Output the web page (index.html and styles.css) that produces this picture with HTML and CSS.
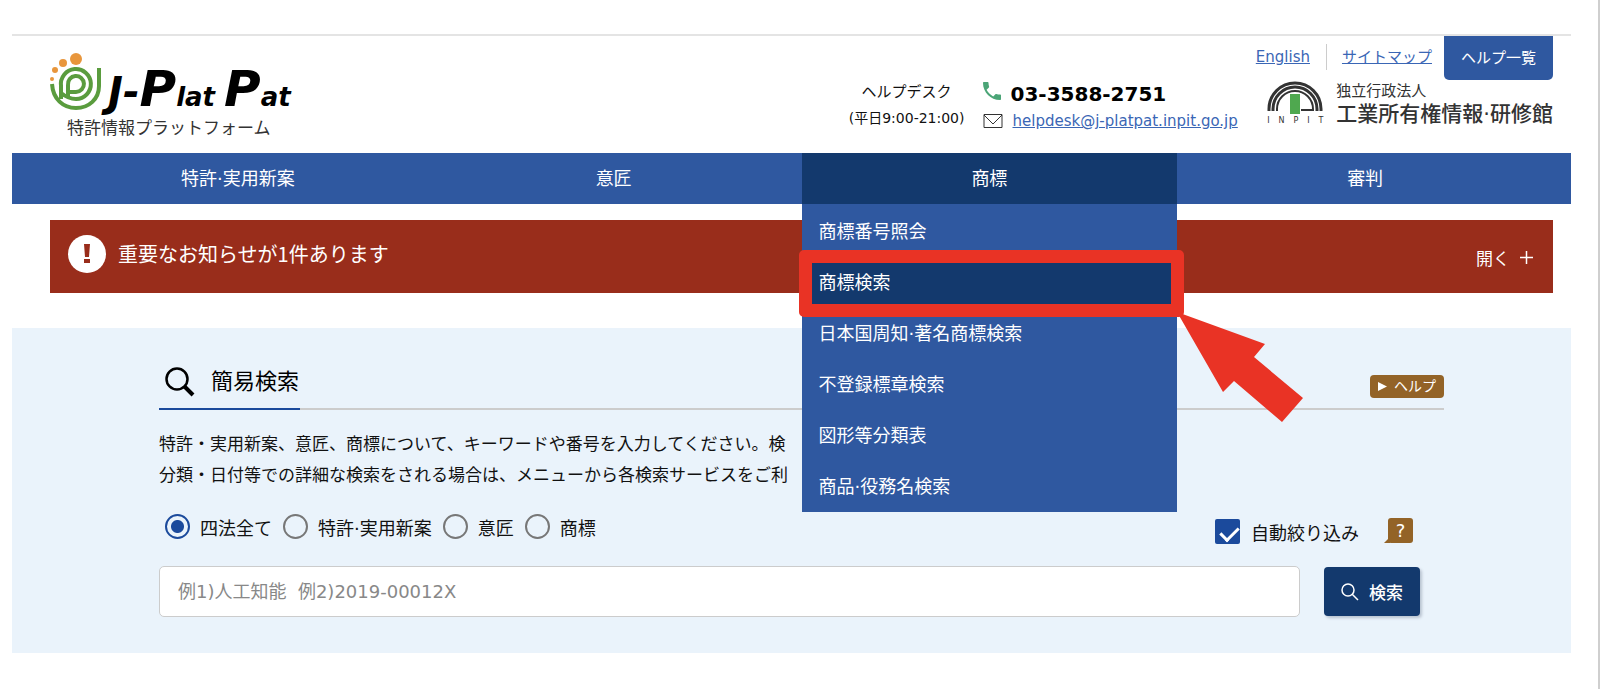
FILE: index.html
```html
<!DOCTYPE html>
<html lang="ja">
<head>
    <meta charset="UTF-8">
    <meta name="viewport" content="width=device-width, initial-scale=1.0">
    <title>J-PlatPat 特許情報プラットフォーム</title>
    <link rel="stylesheet" href="styles.css">
</head>
<body>
    <div class="page">
        <header class="header">
            <a class="logo" href="#">
                <span class="logo-main">
                    <svg class="logo-mark" viewBox="0 0 52 58" width="52" height="58" aria-hidden="true">
                        <g fill="#e8963c">
                            <circle cx="26" cy="6" r="6"/>
                            <circle cx="13" cy="10" r="4"/>
                            <circle cx="5" cy="17" r="3"/>
                            <circle cx="2" cy="26" r="2"/>
                        </g>
                        <g fill="none" stroke="#5a9c3e" stroke-width="4">
                            <path d="M2 31C3 46 13 55 26 55C39 55 49 46 49 33V15"/>
                            <path d="M11 46V33A15 15 0 1 1 26 46C20 46 16 44 11 40"/>
                            <path d="M18 43V32A8 8 0 1 1 26 39H20"/>
                        </g>
                    </svg>
                    <span class="logo-word">J-<b>P</b><small>lat </small><b>P</b><small>at</small></span>
                </span>
                <span class="logo-sub">特許情報プラットフォーム</span>
            </a>

            <div class="header-right">
                <div class="helpdesk">
                    <div class="helpdesk-label">
                        <div>ヘルプデスク</div>
                        <div class="hours">(平日9:00-21:00)</div>
                    </div>
                    <div class="helpdesk-contact">
                        <div class="contact-row">
                            <svg class="phone-icon" viewBox="3 3 18 18" width="18" height="18" aria-hidden="true">
                                <path fill="#4ba577" d="M6.6 10.8c1.4 2.8 3.800 5.100 6.600 6.600l2.200-2.200c.3-.3.7-.4 1-.2 1.100.4 2.300.6 3.600.6.600 0 1 .4 1 1V20c0 .6-.4 1-1 1C10.600 21 3 13.400 3 4c0-.6.4-1 1-1h3.500c.6 0 1 .4 1 1 0 1.300.2 2.500.6 3.600.1.300 0 .7-.2 1z"/>
                            </svg>
                            <span class="phone">03-3588-2751</span>
                        </div>
                        <div class="contact-row">
                            <svg viewBox="0 0 20 14" width="20" height="14" aria-hidden="true">
                                <path fill="none" stroke="#333" d="M1 .5H19V13.500H1ZM1 1L10 10L19 1"/>
                            </svg>
                            <a class="link" href="mailto:helpdesk@j-platpat.inpit.go.jp">helpdesk@j-platpat.inpit.go.jp</a>
                        </div>
                    </div>
                </div>

                <div class="header-side">
                    <div class="top-links">
                        <a class="link" href="#">English</a>
                        <a class="link sitemap" href="#">サイトマップ</a>
                        <button type="button" class="help-list-btn">ヘルプ一覧</button>
                    </div>
                    <a class="org" href="#">
                        <span class="org-mark">
                            <svg viewBox="0 0 56 34" width="56" height="34" aria-hidden="true">
                                <g fill="none" stroke="#333" stroke-width="3">
                                    <path d="M2 30V28A26 26 0 0 1 54 28V30"/>
                                    <path d="M6 30V28A22 22 0 0 1 50 28V30"/>
                                    <path d="M10 30V28A18 18 0 0 1 46 28V29H34" stroke-width="2"/>
                                </g>
                                <rect x="23" y="13" width="10" height="20" fill="#4fa84f"/>
                            </svg>
                            <span class="org-letters"><i>I</i><i>N</i><i>P</i><i>I</i><i>T</i></span>
                        </span>
                        <span class="org-name">
                            <span class="org-type">独立行政法人</span>
                            <span class="org-title">工業所有権情報·研修館</span>
                        </span>
                    </a>
                </div>
            </div>
        </header>

        <nav class="nav">
            <ul class="nav-list">
                <li class="nav-item"><a class="nav-link" href="#">特許·実用新案</a></li>
                <li class="nav-item"><a class="nav-link" href="#">意匠</a></li>
                <li class="nav-item">
                    <a class="nav-link active" href="#">商標</a>
                    <ul class="submenu">
                        <li><a class="submenu-link" href="#">商標番号照会</a></li>
                        <li class="marked">
                            <a class="submenu-link active" href="#">商標検索</a>
                            <svg class="arrow" viewBox="0 0 126 110" width="126" height="110" aria-hidden="true">
                                <path fill="#e93325" d="M0 0L88 32L77 45L126 86L105 110L57 69L46 80Z"/>
                            </svg>
                        </li>
                        <li><a class="submenu-link" href="#">日本国周知·著名商標検索</a></li>
                        <li><a class="submenu-link" href="#">不登録標章検索</a></li>
                        <li><a class="submenu-link" href="#">図形等分類表</a></li>
                        <li><a class="submenu-link" href="#">商品·役務名検索</a></li>
                    </ul>
                </li>
                <li class="nav-item"><a class="nav-link" href="#">審判</a></li>
            </ul>
        </nav>

        <div class="notice">
            <svg viewBox="0 0 38 38" width="38" height="38" aria-hidden="true">
                <circle cx="19" cy="19" r="19" fill="#fff"/>
                <path fill="#992d1b" d="M16 9H22L21 22H17ZM16 24H22V28H16Z"/>
            </svg>
            <p class="notice-text">重要なお知らせが1件あります</p>
            <button type="button" class="notice-open">
                開く
                <svg viewBox="0 0 13 13" width="13" height="13" aria-hidden="true">
                    <path fill="none" stroke="#fff" stroke-width="1.500" d="M0 6.500H13M6.500 0V13"/>
                </svg>
            </button>
        </div>

        <main class="search">
            <div class="search-head">
                <h1 class="search-title">
                    <svg viewBox="0 0 30 30" width="30" height="30" aria-hidden="true">
                        <circle cx="12" cy="12" r="10.500" fill="none" stroke="#000" stroke-width="2.500"/>
                        <path stroke="#000" stroke-width="4" d="M19 19L28 28"/>
                    </svg>
                    簡易検索
                </h1>
                <button type="button" class="help-btn">
                    <svg viewBox="0 0 9 9" width="9" height="9" aria-hidden="true"><path fill="#fff" d="M0 0L9 4.500L0 9Z"/></svg>
                    ヘルプ
                </button>
            </div>

            <p class="search-desc">
                特許・実用新案、意匠、商標について、キーワードや番号を入力してください。検<br>
                分類・日付等での詳細な検索をされる場合は、メニューから各検索サービスをご利
            </p>

            <form class="search-form">
                <div class="options">
                    <div class="radios">
                        <label class="radio"><input type="radio" name="law" checked>四法全て</label>
                        <label class="radio"><input type="radio" name="law">特許·実用新案</label>
                        <label class="radio"><input type="radio" name="law">意匠</label>
                        <label class="radio"><input type="radio" name="law">商標</label>
                    </div>
                    <div class="narrow">
                        <label class="check"><input type="checkbox" checked>自動絞り込み</label>
                        <button type="button" class="tip-btn">?</button>
                    </div>
                </div>
                <div class="search-row">
                    <input type="text" class="keyword" aria-label="キーワード" placeholder="例1)人工知能&nbsp; 例2)2019-00012X">
                    <button type="submit" class="search-btn">
                        <svg viewBox="0 0 18 18" width="18" height="18" aria-hidden="true">
                            <circle cx="7" cy="7" r="6" fill="none" stroke="#fff" stroke-width="1.500"/>
                            <path stroke="#fff" stroke-width="1.500" d="M11 11L17 17"/>
                        </svg>
                        検索
                    </button>
                </div>
            </form>
        </main>
    </div>
</body>
</html>
```

FILE: styles.css
```css
* {
    margin: 0;
    padding: 0;
    box-sizing: border-box;
}

html {
    min-height: 100vh;
    border-right: 2px solid #cfcfcf;
}

body {
    font-family: "DejaVu Sans", "Noto Sans CJK JP", sans-serif;
    font-size: 17px;
    color: #111;
    background: #fff;
}

button,
input {
    font-family: inherit;
}

button {
    border: none;
    cursor: pointer;
}

a {
    color: inherit;
    text-decoration: none;
}

ul {
    list-style: none;
}

svg {
    display: block;
    flex: none;
}

.page {
    margin: 34px 27px 0 12px;
    border-top: 2px solid #e4e4e4;
}

.link {
    font-size: 15px;
    color: #3a66b5;
    text-decoration: underline;
}

/* header */
.header {
    display: flex;
    justify-content: space-between;
    padding: 0 18px 13px 38px;
}

.logo {
    padding-top: 17px;
}

.logo-main {
    display: flex;
    align-items: flex-end;
    gap: 6px;
}

.logo-word {
    font-size: 40px;
    font-weight: bold;
    font-style: italic;
    line-height: 38px;
    color: #000;
    white-space: nowrap;
}

.logo-word b {
    font-size: 50px;
}

.logo-word small {
    font-size: 26px;
    line-height: 20px;
}

.logo-sub {
    display: block;
    padding: 5px 0 0 17px;
    line-height: 24px;
    color: #333;
}

.header-right {
    display: flex;
    gap: 18px;
}

.helpdesk {
    display: flex;
    gap: 18px;
    padding-top: 43px;
}

.helpdesk-label {
    font-size: 15px;
    line-height: 26px;
    text-align: center;
}

.hours {
    font-size: 14px;
}

.contact-row {
    display: flex;
    align-items: center;
    gap: 10px;
    line-height: 24px;
}

.phone-icon {
    margin-bottom: 6px;
}

.phone {
    font-size: 20px;
    font-weight: bold;
    line-height: 30px;
    color: #000;
}

.header-side {
    display: flex;
    flex-direction: column;
    align-items: flex-end;
}

.top-links {
    display: flex;
    align-items: flex-start;
    line-height: 42px;
}

.sitemap {
    position: relative;
    margin: 0 12px 0 16px;
    padding-left: 16px;
}

.sitemap::before {
    content: "";
    position: absolute;
    left: 0;
    top: 8px;
    height: 26px;
    border-left: 1px solid #ccc;
}

.help-list-btn {
    height: 44px;
    padding: 0 17px 4px;
    font-size: 15px;
    color: #fff;
    background: #2f58a0;
    border-radius: 0 0 5px 5px;
}

.org {
    display: flex;
    gap: 13px;
    color: #333;
}

.org-mark {
    padding-top: 1px;
}

.org-letters {
    display: flex;
    justify-content: space-between;
    font-size: 8px;
    line-height: 11px;
}

.org-letters i {
    font-style: normal;
}

.org-type {
    display: block;
    font-size: 15px;
    line-height: 22px;
}

.org-title {
    display: block;
    font-size: 21px;
    font-weight: 500;
    line-height: 24px;
}

/* global navigation */
.nav {
    padding: 0 18px 0 38px;
    background: #2f58a0;
}

.nav-list {
    display: grid;
    grid-template-columns: repeat(4, 1fr);
}

.nav-item {
    position: relative;
}

.nav-link {
    display: block;
    font-size: 18px;
    line-height: 51px;
    text-align: center;
    color: #fff;
}

.nav-link.active,
.submenu-link.active {
    background: #13396d;
}

.submenu {
    position: absolute;
    top: 100%;
    left: 0;
    z-index: 10;
    width: 100%;
    padding-top: 2px;
    background: #2f58a0;
}

.submenu-link {
    display: block;
    padding: 0 17px;
    font-size: 18px;
    line-height: 51px;
    color: #fff;
}

.marked {
    position: relative;
    z-index: 1;
}

/* red frame around the highlighted entry */
.marked::after {
    content: "";
    position: absolute;
    top: -7px;
    right: -7px;
    bottom: -9px;
    left: -3px;
    border: 13px solid #e93325;
    border-radius: 5px;
}

.arrow {
    position: absolute;
    top: 55px;
    left: 100%;
}

/* notice bar */
.notice {
    display: flex;
    align-items: center;
    gap: 12px;
    margin: 16px 18px 35px 38px;
    padding: 15px 20px 20px 18px;
    color: #fff;
    background: #992d1b;
}

.notice-text {
    flex: 1;
    font-family: "Noto Sans CJK JP", sans-serif;
    font-size: 20px;
    line-height: 30px;
}

.notice-open {
    display: flex;
    align-items: center;
    gap: 10px;
    padding-top: 6px;
    font-size: 17px;
    color: #fff;
    background: none;
}

/* simple search */
.search {
    padding: 36px 127px 36px 147px;
    background: #eaf3fb;
}

.search-head {
    display: flex;
    align-items: center;
    justify-content: space-between;
    border-bottom: 2px solid #ccc;
}

.search-title {
    display: flex;
    align-items: center;
    gap: 16px;
    margin-bottom: -2px;
    padding: 0 1px 8px 6px;
    font-size: 22px;
    font-weight: normal;
    line-height: 36px;
    color: #000;
    border-bottom: 2px solid #1b4a9c;
}

.help-btn {
    display: flex;
    align-items: center;
    gap: 7px;
    padding: 0 8px;
    font-size: 14px;
    line-height: 23px;
    color: #fff;
    background: #936327;
    border-radius: 4px;
}

.search-desc {
    margin-top: 19px;
    line-height: 31px;
}

.options {
    display: flex;
    justify-content: space-between;
    padding: 23px 31px 0 6px;
}

.radios {
    display: flex;
    gap: 11px;
    font-size: 18px;
}

.radio {
    display: flex;
    align-items: center;
    gap: 10px;
    height: 25px;
}

.radio input {
    appearance: none;
    width: 25px;
    height: 25px;
    border: 2px solid #777;
    border-radius: 50%;
}

.radio input:checked {
    border-color: #1b4a9c;
    background: radial-gradient(circle, #1b4a9c 6px, transparent 7px);
}

.narrow {
    display: flex;
    gap: 29px;
    padding-top: 4px;
}

.check {
    display: flex;
    align-items: center;
    gap: 11px;
    height: 27px;
    font-size: 18px;
}

.check input {
    appearance: none;
    position: relative;
    width: 25px;
    height: 25px;
    background: #1b4a9c;
    border-radius: 2px;
}

.check input::after {
    content: "";
    position: absolute;
    top: 4px;
    left: 9px;
    width: 8px;
    height: 15px;
    border: solid #fff;
    border-width: 0 3px 3px 0;
    transform: rotate(45deg);
}

.tip-btn {
    position: relative;
    width: 25px;
    height: 25px;
    font-size: 18px;
    line-height: 25px;
    color: #fff;
    background: #936327;
    border-radius: 3px;
}

.tip-btn::before {
    content: "";
    position: absolute;
    bottom: 0;
    left: -4px;
    border-left: 6px solid transparent;
    border-bottom: 6px solid #936327;
}

.search-row {
    display: flex;
    gap: 24px;
    margin-top: 21px;
    padding-right: 24px;
}

.keyword {
    flex: 1;
    min-width: 0;
    height: 51px;
    padding: 0 18px;
    font-size: 18px;
    background: #fff;
    border: 1px solid #ccc;
    border-radius: 5px;
}

.keyword::placeholder {
    color: #888;
}

.search-btn {
    display: flex;
    align-items: center;
    gap: 10px;
    height: 49px;
    margin-top: 1px;
    padding: 0 17px;
    font-size: 17px;
    font-weight: 500;
    color: #fff;
    background: #13396d;
    border-radius: 4px;
    box-shadow: 2px 2px 3px #b9c3d0;
}
```
